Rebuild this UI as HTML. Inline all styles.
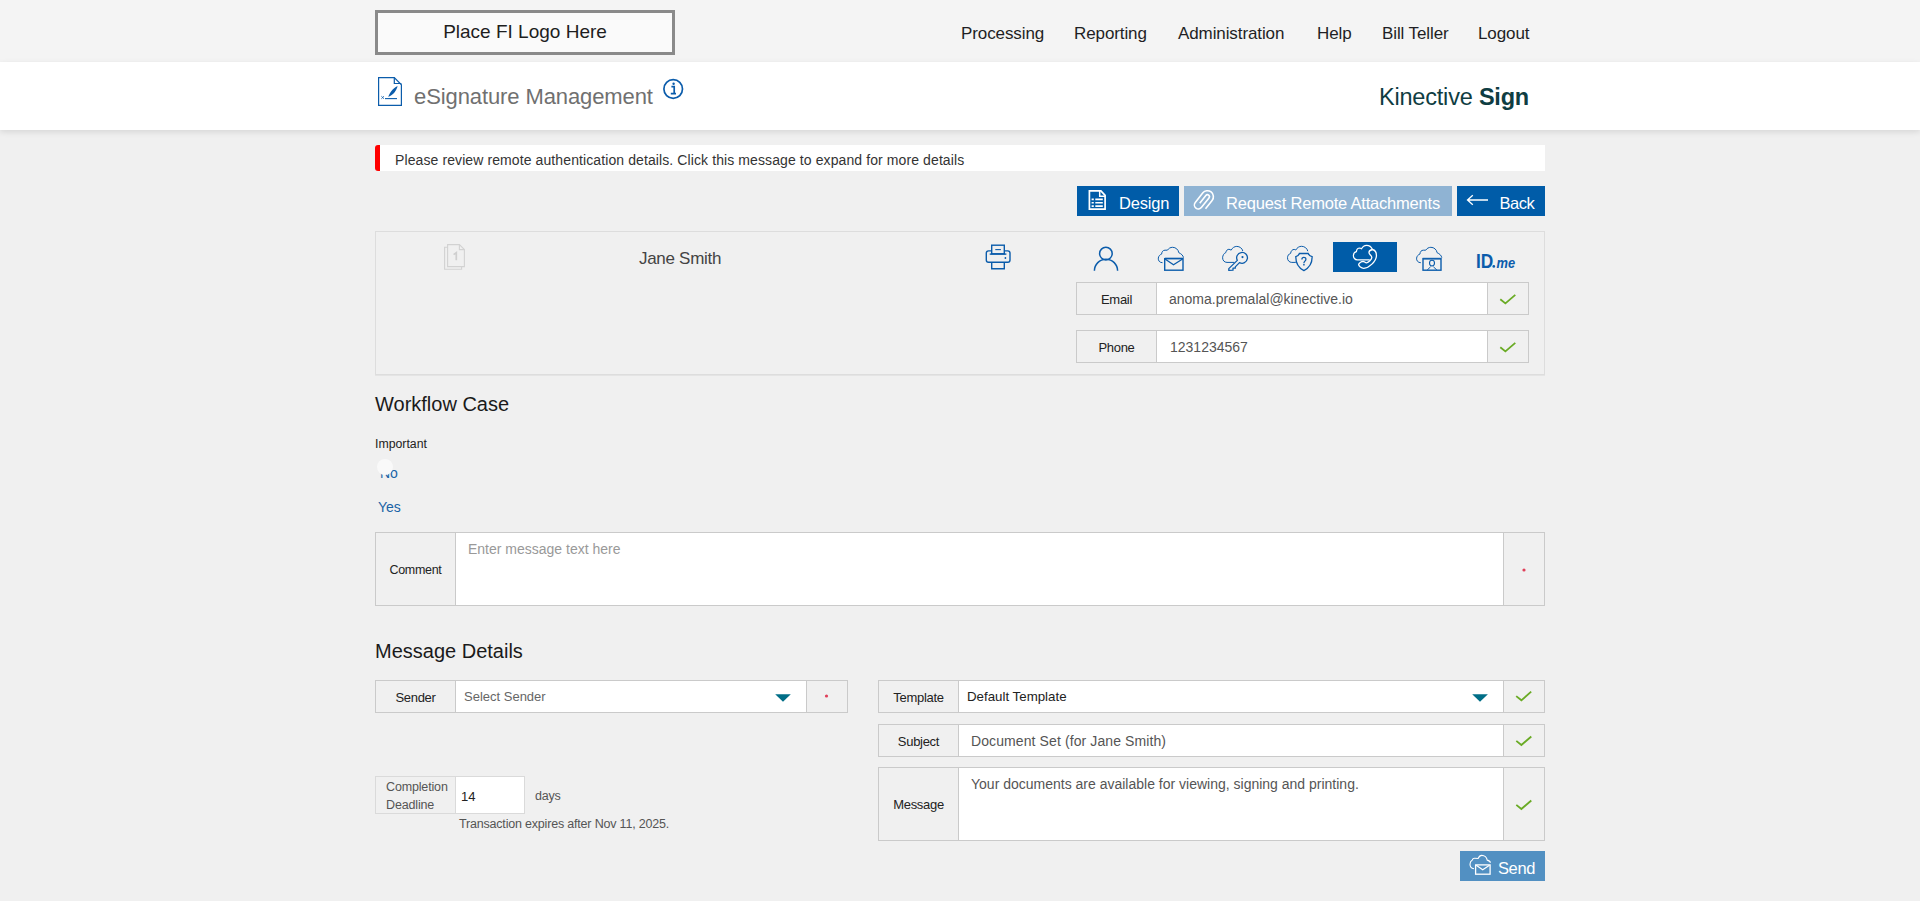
<!DOCTYPE html>
<html><head><meta charset="utf-8">
<style>
*{box-sizing:border-box;margin:0;padding:0}
html,body{width:1920px;height:901px;overflow:hidden;background:#f0f0f0;font-family:"Liberation Sans",sans-serif;color:#222}
.a{position:absolute;white-space:nowrap}
#top{left:0;top:0;width:1920px;height:62px;background:#f4f4f4}
#logo{left:375px;top:10px;width:300px;height:45px;border:3px solid #8a8a8a;background:#fafafa;font-size:19px;color:#1e1e1e;text-align:center;line-height:37px}
.nav{top:23px;font-size:17px;color:#1f1f24;line-height:22px;letter-spacing:-0.1px}
#hdr{left:0;top:62px;width:1920px;height:68px;background:#fff;box-shadow:0 2px 6px rgba(0,0,0,.11)}
#title{left:414px;top:84px;font-size:22px;color:#707070;line-height:26px;letter-spacing:-0.1px}
#brand{left:1379px;top:83px;font-size:23.5px;color:#0f3d42;line-height:28px;letter-spacing:-0.2px}
#alert{left:375px;top:145px;width:1170px;height:26px;background:#fff;border-left:5px solid #f00;border-radius:3px 0 0 3px;font-size:14px;color:#333;line-height:30px;padding-left:15px;letter-spacing:0.1px}
.btn{top:186px;height:30px;background:#005ca8;color:#fff;font-size:16.5px;line-height:34px;letter-spacing:-0.2px}
#panel{left:375px;top:231px;width:1170px;height:144px;border:1px solid #dddddd;background:#f0f0f0;box-shadow:0 1px 0 #e4e4e4}
.lbl{background:#f0f0f0;border:1px solid #cacaca;font-size:13px;color:#222;text-align:center;letter-spacing:-0.3px}
.inp{background:#fff;border-top:1px solid #cacaca;border-bottom:1px solid #cacaca;font-size:14px;color:#555}
.chk{background:#f0f0f0;border:1px solid #cacaca}
.h2{font-size:20px;color:#1a1a1a;line-height:24px}
svg{position:absolute;left:0;top:0}
</style></head>
<body>
<div id="top" class="a"></div>
<div id="logo" class="a">Place FI Logo Here</div>
<div class="a nav" style="left:961px">Processing</div>
<div class="a nav" style="left:1074px">Reporting</div>
<div class="a nav" style="left:1178px">Administration</div>
<div class="a nav" style="left:1317px">Help</div>
<div class="a nav" style="left:1382px">Bill Teller</div>
<div class="a nav" style="left:1478px">Logout</div>

<div id="hdr" class="a"></div>
<div id="title" class="a">eSignature Management</div>
<div id="brand" class="a">Kinective <b>Sign</b></div>

<div id="alert" class="a">Please review remote authentication details. Click this message to expand for more details</div>

<div class="a btn" style="left:1077px;width:102px;padding-left:42px">Design</div>
<div class="a btn" style="left:1184px;width:268px;background:#8fb3d3;padding-left:42px">Request Remote Attachments</div>
<div class="a btn" style="left:1457px;width:88px;padding-left:42.5px;letter-spacing:-0.45px">Back</div>

<div id="panel" class="a"></div>
<div class="a" style="left:639px;top:249px;font-size:17px;color:#444;line-height:20px;letter-spacing:-0.3px">Jane Smith</div>
<div class="a" style="left:1333px;top:242px;width:64px;height:30px;background:#005ca8"></div>

<div class="a lbl" style="left:1076px;top:282px;width:81px;height:33px;line-height:33px">Email</div>
<div class="a inp" style="left:1157px;top:282px;width:330px;height:33px;line-height:33px;padding-left:12px">anoma.premalal@kinective.io</div>
<div class="a chk" style="left:1487px;top:282px;width:42px;height:33px"></div>
<div class="a lbl" style="left:1076px;top:330px;width:81px;height:33px;line-height:33px">Phone</div>
<div class="a inp" style="left:1157px;top:330px;width:330px;height:33px;line-height:33px;padding-left:13px">1231234567</div>
<div class="a chk" style="left:1487px;top:330px;width:42px;height:33px"></div>

<div class="a h2" style="left:375px;top:392px">Workflow Case</div>
<div class="a" style="left:375px;top:437px;font-size:12.3px;line-height:15px">Important</div>
<div class="a" style="left:380px;top:465px;font-size:14px;color:#1a64a6;line-height:17px">No</div>
<div class="a" style="left:377px;top:469px;width:16px;height:16px;margin-top:-10px;border-radius:50%;background:#f9f9f9"></div>
<div class="a" style="left:378px;top:499px;font-size:14px;color:#1a64a6;line-height:17px">Yes</div>

<div class="a lbl" style="left:375px;top:532px;width:81px;height:74px;line-height:74px;font-size:12.5px">Comment</div>
<div class="a inp" style="left:456px;top:532px;width:1047px;height:74px;padding:8px 12px;color:#999;line-height:17px">Enter message text here</div>
<div class="a chk" style="left:1503px;top:532px;width:42px;height:74px"></div>

<div class="a h2" style="left:375px;top:639px">Message Details</div>

<div class="a lbl" style="left:375px;top:680px;width:81px;height:33px;line-height:34px">Sender</div>
<div class="a inp" style="left:456px;top:680px;width:350px;height:33px;line-height:31px;padding-left:8px;color:#666;font-size:13px">Select Sender</div>
<div class="a chk" style="left:806px;top:680px;width:42px;height:33px"></div>

<div class="a lbl" style="left:878px;top:680px;width:81px;height:33px;line-height:34px">Template</div>
<div class="a inp" style="left:959px;top:680px;width:544px;height:33px;line-height:31px;padding-left:8px;color:#222;font-size:13.3px">Default Template</div>
<div class="a chk" style="left:1503px;top:680px;width:42px;height:33px"></div>

<div class="a lbl" style="left:878px;top:724px;width:81px;height:33px;line-height:34px">Subject</div>
<div class="a inp" style="left:959px;top:724px;width:544px;height:33px;line-height:33px;padding-left:12px;letter-spacing:0.1px">Document Set (for Jane Smith)</div>
<div class="a chk" style="left:1503px;top:724px;width:42px;height:33px"></div>

<div class="a lbl" style="left:878px;top:767px;width:81px;height:74px;line-height:74px">Message</div>
<div class="a inp" style="left:959px;top:767px;width:544px;height:74px;padding:8px 12px;line-height:17px">Your documents are available for viewing, signing and printing.</div>
<div class="a chk" style="left:1503px;top:767px;width:42px;height:74px"></div>

<div class="a" style="left:375px;top:776px;width:81px;height:38px;border:1px solid #dadada;background:#f0f0f0;font-size:12.5px;line-height:18px;padding:1px 0 0 10px;color:#555;letter-spacing:-0.15px">Completion<br>Deadline</div>
<div class="a" style="left:456px;top:776px;width:69px;height:38px;background:#fff;border:1px solid #dadada;border-left:0;font-size:13px;line-height:40px;padding-left:5px;color:#222">14</div>
<div class="a" style="left:535px;top:788px;font-size:12.5px;color:#555;line-height:16px;letter-spacing:-0.2px">days</div>
<div class="a" style="left:459px;top:816px;font-size:12.5px;color:#555;line-height:16px;letter-spacing:-0.19px">Transaction expires after Nov 11, 2025.</div>

<div class="a btn" style="left:1460px;top:851px;width:85px;background:#5290c2;padding-left:38px;letter-spacing:-0.4px">Send</div>
<svg width="1920" height="901" viewBox="0 0 1920 901">
<defs>
<path id="cloud" d="M4.5,15.6 C1.6,15.6 0,13.4 0.3,11 C0.6,9 1.8,7.6 3.6,7.0 C3.8,4.6 5,3.1 7,3.1 L9.4,3.1 C10.6,1.3 12.4,0.2 14.6,0.2 C17.8,0.2 20.4,2.6 20.8,5.6 C23.2,6.6 25.2,8.4 25.5,10.6" fill="none" stroke-width="1"/>
</defs>
<!-- header doc sign icon -->
<g fill="none" stroke="#0b5cab" stroke-width="1.2">
<path d="M378.6,77.6 H394.3 L401.4,84.8 V105.4 H378.6 Z"/>
<path d="M394.3,77.6 V83.5 H401.4"/>
<path d="M385,98.6 H397" stroke-width="1.1"/>
<path d="M381.3,96.2 L384,98.8 M384,96.2 L381.3,98.8" stroke-width="0.8"/>
</g>
<path d="M388.3,97 C389.5,93 392.5,88.5 397.6,86 C396.5,90.5 393.5,94.5 389.6,96.2 Z" fill="#0b5cab"/>
<!-- info icon -->
<circle cx="673.2" cy="89" r="9.3" fill="none" stroke="#0b5cab" stroke-width="1.7"/>
<path d="M671.4,86.7 H674.2 V93.5 M670.8,93.6 H676" fill="none" stroke="#0b5cab" stroke-width="1.7"/>
<circle cx="673.6" cy="83.8" r="1.2" fill="#0b5cab"/>
<!-- design icon -->
<g fill="none" stroke="#fff" stroke-width="1.7">
<path d="M1089.4,190.9 H1100.9 L1105.1,195.3 V209.2 H1089.4 Z"/>
<path d="M1099.7,190.9 V196.2 H1105.1" stroke-width="1.5"/>
<path d="M1095.3,199.4 H1102.8 M1095.3,202.8 H1102.8 M1095.3,206.1 H1102.8" stroke-width="1.6"/>
<path d="M1091.6,199.4 H1093.8 M1091.6,202.8 H1093.8 M1091.6,206.1 H1093.8" stroke-width="1.6"/>
</g>
<!-- paperclip -->
<path d="M6,10.7 V0 A6,6 0 0 0 -6,0 V12 A4,4 0 0 0 2,12 V0 A2,2 0 0 0 -2,0 V9.8" fill="none" stroke="#fff" stroke-width="1.6" transform="matrix(0.786,0.619,-0.619,0.786,1207.4,196.7)"/>
<!-- back arrow -->
<path d="M1467.5,200 H1488 M1472.8,195.2 L1467.5,200 L1472.8,204.8" fill="none" stroke="#fff" stroke-width="1.3"/>
<!-- gray doc -->
<g fill="none" stroke="#d2d2d2" stroke-width="1.1">
<path d="M447.6,247.2 H444.6 V269.2 H461.6 V266.6"/>
<path d="M447.6,244.6 H459.4 L464.4,249.6 V266.6 H447.6 Z"/>
<path d="M459.4,244.6 V249.6 H464.4"/>
</g>
<path d="M453.6,254.6 L456.3,252.6 V260.2" fill="none" stroke="#cfcfcf" stroke-width="1.7"/>
<!-- printer -->
<g fill="none" stroke="#0b5cab" stroke-width="1.4">
<rect x="991.7" y="245.2" width="12.6" height="8.6"/>
<path d="M991.7,250.9 H988.5 Q986.3,250.9 986.3,253.1 V260 Q986.3,262.2 988.5,262.2 H1007.8 Q1010,262.2 1010,260 V253.1 Q1010,250.9 1007.8,250.9 H1004.3"/>
<path d="M989.7,254.1 H1006.4"/>
<path d="M991.7,262.2 V268.8 H1004.3 V262.2"/>
<path d="M995.3,249.6 H1000.9" stroke-width="1.1"/>
</g>
<circle cx="1005.4" cy="258" r="0.9" fill="#0b5cab"/>
<!-- person -->
<g fill="none" stroke="#0b5cab" stroke-width="1.5">
<circle cx="1105.9" cy="253.6" r="6.3"/>
<path d="M1094.4,270.8 A11.6,11.6 0 0 1 1117.6,270.8"/>
</g>
<!-- cloud envelope -->
<g stroke="#0b5cab" fill="none">
<use href="#cloud" transform="translate(1158,247.1)"/>
<rect x="1164.7" y="258.7" width="18.3" height="11.5" stroke-width="1.4"/>
<path d="M1164.8,258.2 H1183" stroke-width="1"/>
<path d="M1165,259 L1173.5,264.7 L1182.6,259" stroke-width="1.3"/>
</g>
<!-- cloud key -->
<g stroke="#0b5cab" fill="none">
<path d="M1234.3,262.4 H1227 C1224.3,262.4 1222.6,260.3 1222.6,257.8 C1222.6,255.5 1224,253.2 1225.8,252.6 C1226.2,250.5 1227.4,249.3 1228.9,249.3 C1229.8,249.3 1230.6,249.7 1231.1,250.2 C1232.3,247.8 1234.5,246.4 1236.8,246.4 C1239.8,246.4 1242.2,248.4 1242.8,251" stroke-width="1"/>
<path d="M1237.3,260.4 A5.4,5.4 0 1 1 1239.5,262.6 L1235.3,266.9 V268.2 H1233 V270.2 L1228.8,270.4 V268.6 Z" stroke-width="1.3" stroke-linejoin="round"/>
</g>
<circle cx="1242.5" cy="257.1" r="1.1" fill="#0b5cab"/>
<!-- cloud shield -->
<g stroke="#0b5cab" fill="none">
<path d="M1295.8,262.4 H1291.8 C1289.2,262.4 1287.4,260.3 1287.5,257.7 C1287.6,255.6 1288.7,254 1290.6,253.4 C1290.9,251 1292.3,249.4 1294.2,249.4 L1295.8,250 C1297.1,247.6 1299.2,246.3 1301.6,246.3 C1304.6,246.3 1307.2,248.4 1307.8,251.2" stroke-width="1"/>
<path d="M1299.4,253.5 H1308.2 C1308.8,255.2 1310.3,256.3 1312.1,256.6 C1312.3,262.5 1309.2,267.9 1303.9,270.6 C1298.6,267.9 1295.7,262.5 1295.8,256.6 C1297.5,256.3 1298.8,255.2 1299.4,253.5 Z" stroke-width="1.3"/>
<path d="M1301.9,259.4 C1301.9,256.8 1305.9,256.8 1305.9,259.2 C1305.9,261 1303.9,261.3 1303.9,263.2" stroke-width="1.3"/>
</g>
<rect x="1303" y="264.2" width="1.8" height="1.2" fill="#0b5cab"/>
<!-- cloud phone (selected) -->
<g stroke="#fff" fill="none">
<path d="M1369.8,259.8 H1357.3 C1354.9,259.8 1353.3,257.8 1353.4,255.4 C1353.5,253.5 1354.6,252 1356.4,251.6 C1356.6,249.3 1358,248 1359.9,248 L1361.5,248.8 C1362.7,246.4 1364.6,245.3 1366.6,245.3 C1369.2,245.3 1371.4,246.9 1372.3,249.3" stroke-width="1.2"/>
<path d="M1372.5,249.5 C1375,250.2 1376.6,253 1376.4,256.2 C1376,261.5 1369,268 1363.8,268.3 C1361.5,268.4 1358.6,266 1358.6,264.6 C1358.8,263.2 1361.2,261.4 1363.2,261.3 C1364.3,261.3 1365.2,263 1366.6,262.9 C1368.3,262.6 1371.9,259.5 1371.8,257.3 C1371.7,255.6 1369.1,254.5 1369,252.8 C1368.9,251.5 1370.5,249.9 1372.5,249.5 Z" stroke-width="1.3" stroke-linejoin="round"/>
</g>
<!-- cloud camera -->
<g stroke="#0b5cab" fill="none">
<use href="#cloud" transform="translate(1416.3,247.1)"/>
<rect x="1423" y="258.9" width="18" height="11.3" stroke-width="1.4"/>
<path d="M1422.6,258.3 H1441.4" stroke-width="1"/>
<ellipse cx="1432" cy="263.1" rx="2.5" ry="2.9" stroke-width="1.1"/>
<path d="M1427.2,270 L1430.6,266.8 M1433.4,266.8 L1436.9,270" stroke-width="1"/>
</g>
<!-- ID.me -->
<text x="1476" y="267.8" font-family="Liberation Sans" font-size="20" font-weight="bold" fill="#0b5cab" textLength="17.3" lengthAdjust="spacingAndGlyphs">ID</text>
<circle cx="1493.8" cy="266.4" r="1.35" fill="#0b5cab"/>
<text x="1496.6" y="267.8" font-family="Liberation Sans" font-size="15.5" font-style="italic" font-weight="bold" fill="#0b5cab" textLength="18.6" lengthAdjust="spacingAndGlyphs">me</text>
<!-- checks -->
<g fill="none" stroke="#6aab25" stroke-width="1.8">
<path d="M1500.3,299.3 L1505.4,303.4 L1515.3,294.9"/>
<path d="M1500.3,347.3 L1505.4,351.4 L1515.3,342.9"/>
<path d="M1516.2,696.1 L1521.4,700.3 L1531.2,691.6"/>
<path d="M1516.3,740.9 L1521.4,745 L1531.3,736.5"/>
<path d="M1516.3,804.9 L1521.4,809 L1531.3,800.5"/>
</g>
<!-- red dots -->
<circle cx="1524" cy="570" r="1.6" fill="#e0405a"/>
<circle cx="826.5" cy="696" r="1.6" fill="#e0405a"/>
<!-- dropdowns -->
<path d="M775.2,694.2 H790.8 L783,701.8 Z" fill="#006e87"/>
<path d="M1472.2,694.2 H1487.9 L1480,701.8 Z" fill="#006e87"/>
<!-- send icon -->
<g stroke="#fff" fill="none">
<path d="M1474,868.7 C1471.5,868.5 1470,866.5 1470,864.3 C1470,862.3 1471,860.7 1472.3,860 C1472.6,858.9 1473.5,858.2 1474.6,858.2 C1475.8,858.2 1477,858.3 1478.1,858.5 C1479,856.5 1480.3,855.4 1481.8,855.4 C1484.5,855.4 1486.8,857.5 1487.2,860.1 C1489,860.6 1490.3,861.5 1490.4,862.7" stroke-width="1.1"/>
<rect x="1475.6" y="864.9" width="14.5" height="9.3" stroke-width="1.3"/>
<path d="M1476.2,865.3 L1482.7,869.7 L1489.5,865.3" stroke-width="1.2"/>
</g>
</svg>

</body></html>
